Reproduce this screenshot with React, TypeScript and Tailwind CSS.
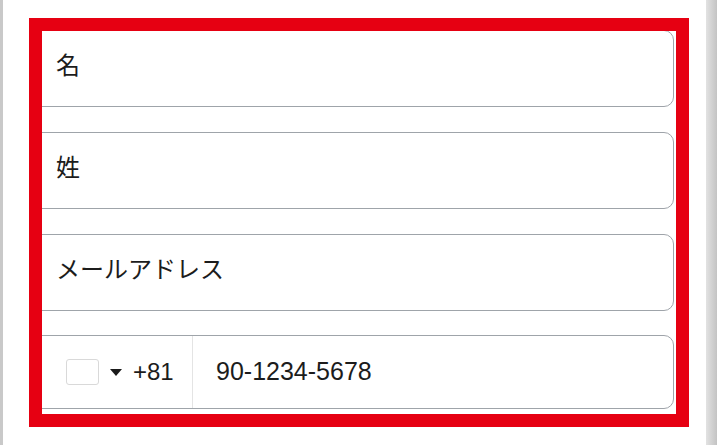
export default function App() {
  const font = { fontFamily: '"Liberation Sans", "Noto Sans CJK JP", sans-serif' };

  return (
    <main className="flex h-[445px] w-full bg-white" style={font}>
      <div className="w-[3px] bg-[#c9c9c9]" />
      <div className="flex-1">
        {/* highlighted form area */}
        <div className="ml-[26px] mt-[18px] h-[409px] w-[660px] overflow-hidden border-[13px] border-[#e60012] bg-white">
          <div className="-ml-[14px] mr-[2px] flex flex-col">
            <div className="-mt-[1px] flex h-[77px] items-center rounded-[10px] border border-[#9fa4aa] pb-[6px] pl-[27px] text-[24px] text-[#1c1c1c]">
              名
            </div>
            <div className="mt-[25px] flex h-[77px] items-center rounded-[10px] border border-[#9fa4aa] pb-[6px] pl-[27px] text-[24px] text-[#1c1c1c]">
              姓
            </div>
            <div className="mt-[25px] flex h-[77px] items-center rounded-[10px] border border-[#9fa4aa] pb-[6px] pl-[27px] text-[24px] text-[#1c1c1c]">
              メールアドレス
            </div>
            <div className="mt-[24px] flex h-[74px] rounded-[10px] border border-[#9fa4aa] text-[24px] text-[#1c1c1c]">
              <div className="flex w-[164px] items-center border-r border-[#e4e4e4] pl-[37px]">
                <div className="h-[26px] w-[33px] rounded-[3px] border border-[#d9d9d9]" />
                <svg className="ml-[11px]" width="12" height="7" viewBox="0 0 12 7">
                  <polygon points="0,0 12,0 6,7" fill="#1a1a1a" />
                </svg>
                <span className="ml-[11px]">+81</span>
              </div>
              <div className="flex items-center pl-[23px] text-[25px]">90-1234-5678</div>
            </div>
          </div>
        </div>
      </div>
      <div className="w-[11px] bg-gradient-to-r from-[#e2e2e2] to-[#c3c3c3]" />
    </main>
  );
}
